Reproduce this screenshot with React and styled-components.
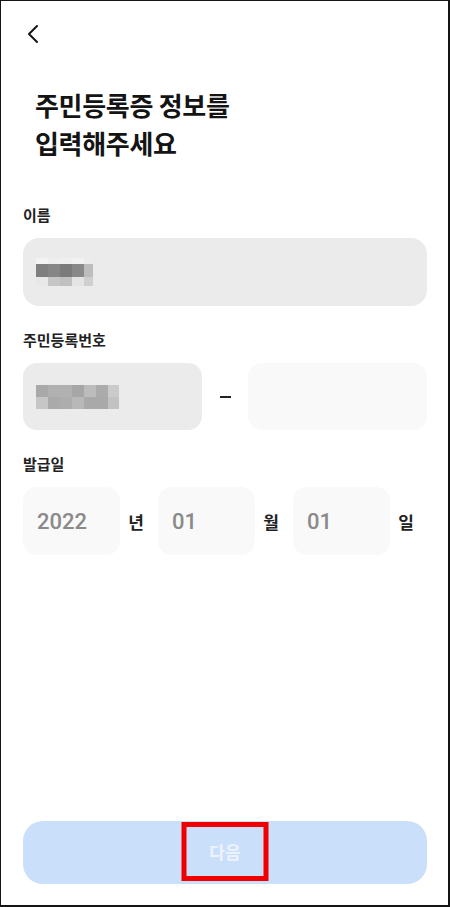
import React from "react";
import styled, { createGlobalStyle } from "styled-components";

const Global = createGlobalStyle`
  html, body { margin: 0; padding: 0; background: #fff; }
  body { font-family: "Noto Sans CJK KR", "Noto Sans", sans-serif; }
  * { box-sizing: border-box; }
`;

const Page = styled.div`
  width: 450px;
  height: 907px;
  border-style: solid;
  border-color: #141414;
  border-width: 1px 2px 2px 1px;
  background: #fff;
  display: flex;
  flex-direction: column;
  padding: 0 21px 21px 22px;
`;

const TopBar = styled.div`
  display: flex;
  align-items: center;
  padding-top: 23px;
  padding-left: 4px;
  height: 43px;
`;

const BackButton = styled.button`
  border: 0;
  background: none;
  padding: 0;
  width: 12px;
  height: 20px;
  display: flex;
  cursor: pointer;
`;

const Title = styled.h1`
  margin: 42px 0 0;
  padding-left: 12px;
  font-size: 26px;
  line-height: 38px;
  font-weight: 700;
  color: #141414;
  letter-spacing: -0.3px;
`;

const Form = styled.div`
  margin-top: 43px;
  display: flex;
  flex-direction: column;
  gap: 24px;
`;

const Field = styled.div`
  display: flex;
  flex-direction: column;
`;

const Label = styled.label`
  font-size: 15px;
  line-height: 20px;
  font-weight: 700;
  color: #222;
  margin-bottom: 13px;
`;

const InputBox = styled.div`
  height: ${(p) => p.$h || 68}px;
  border-radius: ${(p) => p.$r || 14}px;
  background: ${(p) => (p.$filled ? "#ebebeb" : "#f9f9f9")};
  display: flex;
  align-items: center;
  padding-left: 13px;
  min-width: 0;
`;

const Mosaic = styled.div`
  display: grid;
  grid-template-columns: ${(p) => p.$cols};
  grid-template-rows: ${(p) => p.$rows};
`;

const Cell = styled.span`
  display: block;
  background: ${(p) => p.$c};
`;

const RrnRow = styled.div`
  display: grid;
  grid-template-columns: 1fr 46px 1fr;
  align-items: center;
`;

const Dash = styled.span`
  justify-self: center;
  width: 11px;
  height: 2px;
  background: #222;
  margin-top: 1px;
`;

const DateRow = styled.div`
  display: flex;
  gap: 14px;
`;

const DateGroup = styled.div`
  display: flex;
  align-items: center;
  gap: 8px;
`;

const DateInput = styled(InputBox)`
  width: ${(p) => p.$w}px;
  padding-left: 14px;
  font-family: "Roboto", "Noto Sans", sans-serif;
  font-size: 22px;
  font-weight: 500;
  color: #8a8a8a;
`;

const Unit = styled.span`
  width: 16px;
  font-size: 17px;
  font-weight: 700;
  color: #222;
  text-align: center;
`;

const NextButton = styled.button`
  position: relative;
  margin-top: auto;
  height: 63px;
  width: 100%;
  border: 0;
  border-radius: 20px;
  background: #cadffa;
  color: #eef4fe;
  font-family: "Noto Sans CJK KR", sans-serif;
  font-size: 17px;
  font-weight: 700;
  display: flex;
  align-items: center;
  justify-content: center;
  padding: 0 0 2px;
`;

const Highlight = styled.span`
  position: absolute;
  left: 50%;
  top: 1px;
  width: 87px;
  height: 59px;
  transform: translateX(-50%);
  border: 5px solid #f00000;
  pointer-events: none;
`;

const nameTop = ["#f3f3f3", "#eeeeee", "#efefef", "#f1f1f1", "#ececec"];
const nameMid = ["#7f7f7f", "#868686", "#7b7b7b", "#888888", "#bdbdbd"];
const nameBot = ["#e8e8e8", "#c6c6c6", "#c0c0c0", "#e4e4e4", "#cfcfcf"];

const rrnTop = ["#a9a9a9", "#b1b1b1", "#b1b1b1", "#a6a6a6", "#bcbcbc", "#ababab", "#cacaca"];
const rrnBot = ["#c6c6c6", "#aaaaaa", "#adadad", "#b8b8b8", "#a9a9a9", "#a9a9a9", "#c2c2c2"];

export default function App() {
  return (
    <>
      <Global />
      <Page>
        <TopBar>
          <BackButton aria-label="뒤로">
            <svg width="12" height="20" viewBox="0 0 12 20">
              <polyline
                points="10,2 2,10 10,18"
                fill="none"
                stroke="#141414"
                strokeWidth="2"
                strokeLinecap="round"
                strokeLinejoin="round"
              />
            </svg>
          </BackButton>
        </TopBar>
        <Title>
          주민등록증 정보를
          <br />
          입력해주세요
        </Title>
        <Form>
          <Field>
            <Label>이름</Label>
            <InputBox $filled $r={16}>
              <Mosaic $cols="12px 12px 12px 12px 9px" $rows="6px 13px 9px">
                {[...nameTop, ...nameMid, ...nameBot].map((c, i) => (
                  <Cell key={i} $c={c} />
                ))}
              </Mosaic>
            </InputBox>
          </Field>
          <Field>
            <Label>주민등록번호</Label>
            <RrnRow>
              <InputBox $filled $h={67}>
                <Mosaic $cols="12px 12px 12px 12px 12px 12px 11px" $rows="12px 12px">
                  {[...rrnTop, ...rrnBot].map((c, i) => (
                    <Cell key={i} $c={c} />
                  ))}
                </Mosaic>
              </InputBox>
              <Dash />
              <InputBox $h={67} />
            </RrnRow>
          </Field>
          <Field>
            <Label>발급일</Label>
            <DateRow>
              <DateGroup>
                <DateInput $w={97} $h={68}>2022</DateInput>
                <Unit>년</Unit>
              </DateGroup>
              <DateGroup>
                <DateInput $w={97} $h={68}>01</DateInput>
                <Unit>월</Unit>
              </DateGroup>
              <DateGroup>
                <DateInput $w={97} $h={68}>01</DateInput>
                <Unit>일</Unit>
              </DateGroup>
            </DateRow>
          </Field>
        </Form>
        <NextButton>
          다음
          <Highlight />
        </NextButton>
      </Page>
    </>
  );
}
